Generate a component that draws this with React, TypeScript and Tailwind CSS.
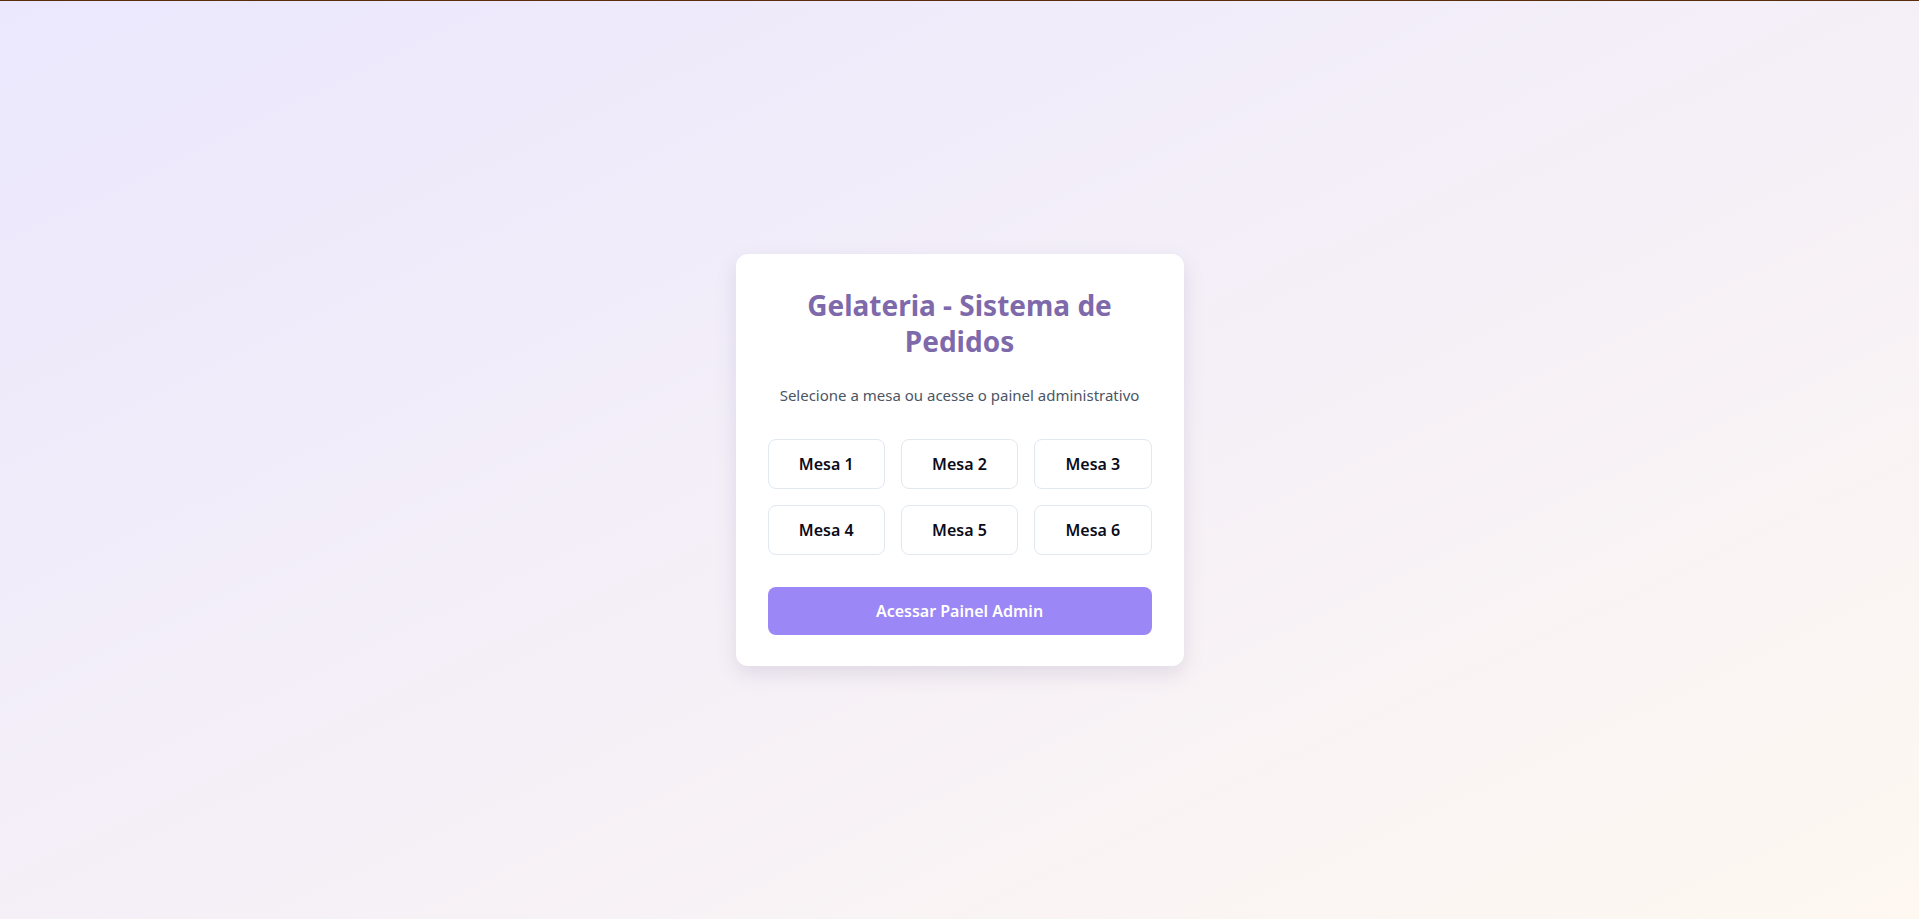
import React from "react";

export default function App() {
  const mesas = [1, 2, 3, 4, 5, 6];
  return (
    <div
      className="flex flex-col w-full h-[919px]"
      style={{ fontFamily: '"Noto Sans", "Open Sans", sans-serif' }}
    >
      <div className="h-px w-full bg-[#5a2d0c]" />
      <div className="flex-1 flex items-center justify-center bg-gradient-to-br from-[#ebe7fd] to-[#fef8f1]">
        <div className="w-[448px] bg-white rounded-xl px-8 pt-[33px] pb-[31px] shadow-[0_8px_20px_rgba(100,80,140,0.15)]">
          <h1 className="text-[28px] leading-[36px] font-bold text-[#7e69ab] text-center">
            Gelateria - Sistema de Pedidos
          </h1>
          <p className="mt-6 text-[15px] leading-6 text-[#4b5563] text-center">
            Selecione a mesa ou acesse o painel administrativo
          </p>
          <div className="mt-8 grid grid-cols-3 gap-4">
            {mesas.map((m) => (
              <button
                key={m}
                className="h-[50px] rounded-lg border border-[#e2e8f0] bg-white text-base font-semibold text-[#0b0b1a]"
              >
                Mesa {m}
              </button>
            ))}
          </div>
          <button className="mt-8 w-full h-12 rounded-lg bg-[#9b87f5] text-white text-base font-semibold">
            Acessar Painel Admin
          </button>
        </div>
      </div>
    </div>
  );
}
